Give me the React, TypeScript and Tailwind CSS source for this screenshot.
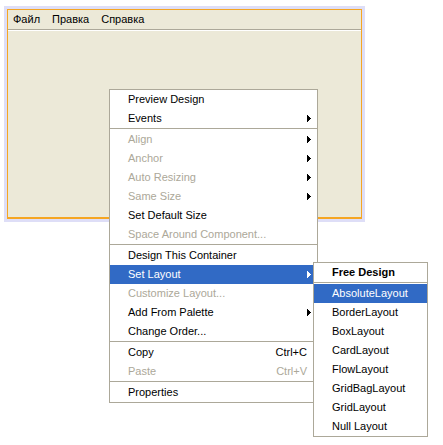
import React from 'react';

type Item =
  | { sep: true }
  | { sep?: false; label: string; disabled?: boolean; arrow?: boolean; shortcut?: string; active?: boolean; bold?: boolean };

const mainItems: Item[] = [
  { label: 'Preview Design' },
  { label: 'Events', arrow: true },
  { sep: true },
  { label: 'Align', disabled: true, arrow: true },
  { label: 'Anchor', disabled: true, arrow: true },
  { label: 'Auto Resizing', disabled: true, arrow: true },
  { label: 'Same Size', disabled: true, arrow: true },
  { label: 'Set Default Size' },
  { label: 'Space Around Component...', disabled: true },
  { sep: true },
  { label: 'Design This Container' },
  { label: 'Set Layout', arrow: true, active: true },
  { label: 'Customize Layout...', disabled: true },
  { label: 'Add From Palette', arrow: true },
  { label: 'Change Order...' },
  { sep: true },
  { label: 'Copy', shortcut: 'Ctrl+C' },
  { label: 'Paste', shortcut: 'Ctrl+V', disabled: true },
  { sep: true },
  { label: 'Properties' },
];

const layoutItems: Item[] = [
  { label: 'Free Design', bold: true },
  { sep: true },
  { label: 'AbsoluteLayout', active: true },
  { label: 'BorderLayout' },
  { label: 'BoxLayout' },
  { label: 'CardLayout' },
  { label: 'FlowLayout' },
  { label: 'GridBagLayout' },
  { label: 'GridLayout' },
  { label: 'Null Layout' },
];

const Arrow = ({ color }: { color: string }) => (
  <svg width="4" height="7" viewBox="0 0 4 7" shapeRendering="crispEdges" fill={color}>
    <path d="M0 0h1v7H0z M1 1h1v5H1z M2 2h1v3H2z M3 3h1v1H3z" />
  </svg>
);

const Menu = ({ items, className }: { items: Item[]; className: string }) => (
  <div className={`absolute bg-white border border-[#ACA899] flex flex-col ${className}`}>
    {items.map((it, i) => {
      if (it.sep) return <div key={i} className="h-[2px] border-t border-[#ACA899] bg-white" />;
      const color = it.active ? 'text-white' : it.disabled ? 'text-[#ACA899]' : 'text-black';
      return (
        <div
          key={i}
          className={`h-[19px] flex items-center pl-[18px] pr-[6px] ${it.active ? 'bg-[#316AC5]' : ''} ${color} ${it.bold ? 'font-bold' : ''}`}
        >
          <span className="flex-1 whitespace-nowrap">{it.label}</span>
          {it.shortcut && <span className="pr-[4px] whitespace-nowrap">{it.shortcut}</span>}
          {it.arrow && <Arrow color={it.active ? '#ffffff' : '#000000'} />}
        </div>
      );
    })}
  </div>
);

export default function App() {
  return (
    <div
      className="relative w-[443px] h-[445px] bg-white text-[11px] leading-none"
      style={{ fontFamily: '"Liberation Sans", Arial, sans-serif' }}
    >
      <div className="absolute left-[4px] top-[6px] w-[361px] h-[216px] bg-[#DEDEF7] p-[3px]">
        <div className="w-full h-full border border-[#F5A623] border-b-2 bg-[#ECE9D8] flex flex-col">
          <div className="h-[20px] flex items-center gap-[12px] pl-[5px] border-b border-[#ACA899] text-black">
            <span>Файл</span>
            <span>Правка</span>
            <span>Справка</span>
          </div>
          <div className="h-px bg-white" />
          <div className="flex-1" />
        </div>
      </div>

      <Menu items={mainItems} className="left-[109px] top-[89px] w-[209px]" />
      <Menu items={layoutItems} className="left-[313px] top-[262px] w-[115px]" />
    </div>
  );
}
